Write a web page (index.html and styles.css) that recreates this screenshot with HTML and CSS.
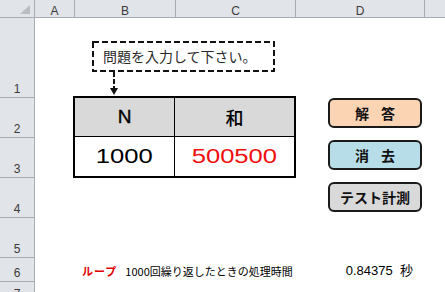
FILE: index.html
```
<!DOCTYPE html>
<html lang="ja">
<head>
    <meta charset="UTF-8">
    <title>ループ計測</title>
    <link rel="stylesheet" href="styles.css">
</head>
<body>
<div class="sheet">
    <!--列見出し-->
    <div class="corner"><span class="tri"></span></div>
    <div class="colh">A</div>
    <div class="colh">B</div>
    <div class="colh">C</div>
    <div class="colh">D</div>
    <div class="colh"></div>

    <!--行見出し-->
    <div class="rowh r1">1</div>
    <div class="rowh r2">2</div>
    <div class="rowh r3">3</div>
    <div class="rowh r4">4</div>
    <div class="rowh r5">5</div>
    <div class="rowh r6">6</div>
    <div class="rowh r7">7</div>

    <!--吹き出し-->
    <div class="callout">
        <div class="note">
            <svg class="dash" width="183" height="31">
                <rect x="1" y="1" width="181" height="29" fill="#fff" stroke="#111" stroke-width="2" stroke-dasharray="6 3"/>
            </svg>
            <span>問題を入力して下さい。</span>
        </div>
        <svg class="pointer" width="14" height="24">
            <line x1="7" y1="0" x2="7" y2="17" stroke="#111" stroke-width="2" stroke-dasharray="5 2"/>
            <polygon points="3,16 11,16 7,23" fill="#111"/>
        </svg>
    </div>

    <!--N と 和-->
    <table class="sum">
        <tr>
            <th class="n">N</th>
            <th>和</th>
        </tr>
        <tr>
            <td class="n"><span class="wide">1000</span></td>
            <td class="red"><span class="wide">500500</span></td>
        </tr>
    </table>

    <!--ボタン-->
    <div class="buttons">
        <div class="btn answer">解<span class="sp"> </span>答</div>
        <div class="btn clear">消<span class="sp"> </span>去</div>
        <div class="btn test">テスト計測</div>
    </div>

    <div class="loop"><b>ループ</b><span class="gap"></span>1000回繰り返したときの処理時間</div>
    <div class="time">0.84375&nbsp;&nbsp;秒</div>
</div>
</body>
</html>
```

FILE: styles.css
```
* {
    padding: 0;
    margin: 0;
    box-sizing: border-box;
}

html, body {
    width: 445px;
    height: 292px;
    overflow: hidden;
    background: #fff;
}

.sheet {
    display: grid;
    grid-template-columns: 35px 40px 101px 120px 129px 40px;
    grid-template-rows: 18px 80px 40px 40px 40px 40px 24px 20px;
    font-family: "Liberation Sans", "Noto Sans CJK JP", sans-serif;
    color: #000;
}

/* 見出し */
.corner, .colh, .rowh {
    background: #e1e4e8;
    border-right: 1px solid #a9adb3;
    border-bottom: 1px solid #a9adb3;
    color: #3a3a3a;
    font-size: 12px;
}

.corner {
    position: relative;
}

.corner .tri {
    position: absolute;
    right: 4px;
    bottom: 3px;
    width: 0;
    height: 0;
    border-left: 10px solid transparent;
    border-bottom: 9px solid #b9bdc2;
}

.colh {
    text-align: center;
    padding-top: 3px;
    line-height: 16px;
}

.rowh {
    grid-column: 1;
    display: flex;
    align-items: flex-end;
    justify-content: center;
    line-height: 14px;
    padding-bottom: 1px;
}

.r1 { grid-row: 2; }
.r2 { grid-row: 3; }
.r3 { grid-row: 4; }
.r4 { grid-row: 5; }
.r5 { grid-row: 6; }
.r6 { grid-row: 7; }
.r7 { grid-row: 8; border-bottom: 0; }

/* 吹き出し */
.callout {
    grid-column: 3 / 5;
    grid-row: 2;
    padding: 23px 0 0 17px;
    display: flex;
    flex-direction: column;
    align-items: flex-start;
}

.note {
    position: relative;
    width: 183px;
    height: 31px;
    padding-left: 11px;
    font-family: "Noto Sans CJK JP", sans-serif;
    font-size: 14px;
    line-height: 30px;
    color: #2a2a2a;
}

.note .dash {
    position: absolute;
    left: 0;
    top: 0;
}

.note span {
    position: relative;
}

.pointer {
    margin-left: 15px;
    display: block;
}

/* 表 */
.sum {
    grid-column: 3 / 5;
    grid-row: 3 / 5;
    margin: -2px 0 -1px -2px;
    width: 223px;
    height: 82px;
    border: 2px solid #000;
    border-spacing: 0;
}

.sum th, .sum td {
    text-align: center;
    padding: 0;
}

.sum th {
    height: 39px;
    background: #d9d9d9;
    border-bottom: 1px solid #000;
    font-size: 18px;
    font-weight: 500;
    font-family: "Liberation Sans", "Noto Sans CJK JP", sans-serif;
}

.sum th.n {
    font-size: 19px;
    -webkit-text-stroke: 0.4px #000;
}

.sum .n {
    width: 100px;
    border-right: 1px solid #000;
}

.sum td {
    font-size: 20px;
}

.wide {
    display: inline-block;
    transform: scaleX(1.28);
}

.red {
    color: #f01010;
}

/* ボタン */
.buttons {
    grid-column: 5;
    grid-row: 3 / 6;
    padding-left: 32px;
    display: flex;
    flex-direction: column;
    gap: 12px;
}

.btn {
    width: 94px;
    height: 30px;
    border: 2px solid #1a1a1a;
    border-radius: 6px;
    text-align: center;
    line-height: 26px;
    font-family: "Noto Sans CJK JP", sans-serif;
    font-size: 14px;
    font-weight: bold;
    color: #111;
}

.btn .sp {
    display: inline-block;
    width: 12px;
}

.answer { background: #fbd4b4; }
.clear { background: #b7dde8; }
.test { background: #d9d9d9; }

/* 処理時間 */
.loop {
    grid-column: 3 / 5;
    grid-row: 7;
    padding: 0 0 4px 7px;
    display: flex;
    align-items: flex-end;
    font-family: "Noto Sans CJK JP", sans-serif;
    font-size: 11px;
    line-height: 14px;
    white-space: nowrap;
}

.loop b {
    color: #e00000;
    letter-spacing: 1px;
}

.loop .gap {
    display: inline-block;
    width: 8px;
}

.time {
    grid-column: 5;
    grid-row: 7;
    padding: 0 12px 3px 0;
    display: flex;
    align-items: flex-end;
    justify-content: flex-end;
    font-size: 13px;
    line-height: 16px;
    font-family: "Liberation Sans", "Noto Sans CJK JP", sans-serif;
}
```
